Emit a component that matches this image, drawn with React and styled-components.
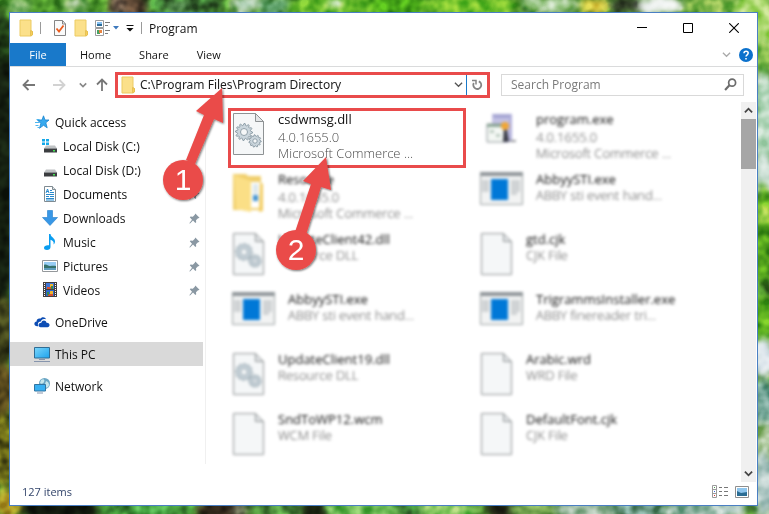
import React, { useState } from "react";
import styled, { createGlobalStyle } from "styled-components";

const GlobalStyle = createGlobalStyle`
  * {
    box-sizing: border-box;
  }

  body {
    margin: 0;
    background: #2c4a1c;
    font-family: "Open Sans", "Noto Sans", sans-serif;
    font-size: 12px;
    color: #111;
  }

  button,
  input {
    font: inherit;
    color: inherit;
    border: none;
    background: none;
    margin: 0;
    padding: 0;
    outline: none;
  }

  svg {
    display: block;
    flex: none;
  }
`;

const Desktop = styled.div`
  position: relative;
  display: flex;
  min-height: 100vh;
  padding: 12px 11px 8px 9px;
`;

const Wallpaper = styled.svg`
  position: absolute;
  inset: 0;
  width: 100%;
  height: 100%;
`;

const Grain = styled.rect`
  mix-blend-mode: overlay;
`;

const Window = styled.main`
  position: relative;
  flex: 1;
  min-width: 0;
  display: flex;
  flex-direction: column;
  background: #fff;
  border: 1px solid #4a7fc4;
`;

const TitleBar = styled.header`
  display: flex;
  align-items: center;
  height: 30px;
  padding-left: 9px;
`;

const QuickButton = styled.button`
  display: flex;
  align-items: center;
  justify-content: center;
  width: ${({ $width = 14 }) => $width}px;
  height: 22px;
`;

const Separator = styled.span`
  width: 1px;
  height: 12px;
  margin: 0 ${({ $gap }) => $gap}px 0 7px;
  background: #9a9a9a;
`;

const QuickTools = styled.div`
  display: flex;
  align-items: center;
  gap: 7px;
`;

const Title = styled.h1`
  flex: 1;
  margin: 0;
  font-size: 12px;
  font-weight: 400;
`;

const WindowButton = styled.button`
  display: flex;
  align-items: center;
  justify-content: center;
  width: 46px;
  height: 30px;
`;

const Ribbon = styled.nav`
  display: flex;
  align-items: center;
  height: 24px;
  border-bottom: 1px solid #dadbdc;
`;

const Tab = styled.button`
  height: 23px;
  padding: 0 14px;
  font-size: 11px;
  ${({ $primary }) =>
    $primary &&
    `
      width: 56px;
      background: #1979ca;
      color: #fff;
    `}
`;

const Spacer = styled.div`
  flex: 1;
`;

const RibbonButton = styled.button`
  padding: 4px;
`;

const NavBar = styled.div`
  display: flex;
  align-items: center;
  height: 35px;
  padding: 0 13px 0 8px;
`;

const NavButtons = styled.div`
  display: flex;
  align-items: center;
  width: 97px;
`;

const NavButton = styled.button`
  display: flex;
  justify-content: center;
  width: ${({ $width }) => $width}px;
`;

const AddressBar = styled.div`
  flex: 1;
  min-width: 0;
  display: flex;
  align-items: center;
  height: 26px;
  padding-left: 3px;
  border: 3px solid #e94b4b;
`;

const AddressInput = styled.input`
  flex: 1;
  min-width: 0;
  margin-left: 5px;
  color: #1c1c1c;
  font-family: "Noto Sans", "Open Sans", sans-serif;
`;

const AddressButton = styled.button`
  display: flex;
  align-items: center;
  justify-content: center;
  width: ${({ $refresh }) => ($refresh ? "21px" : "16px")};
  height: 20px;
  border-left: ${({ $refresh }) => ($refresh ? "1px solid #1979ca" : "none")};
`;

const SearchBox = styled.form`
  display: flex;
  align-items: center;
  width: 243px;
  height: 22px;
  margin-left: 11px;
  padding: 0 6px 0 9px;
  border: 1px solid #d9d9d9;
`;

const SearchInput = styled.input`
  flex: 1;
  min-width: 0;

  &::placeholder {
    color: #7a7a7a;
    opacity: 1;
  }
`;

const Content = styled.div`
  flex: 1;
  display: flex;
  min-height: 0;
`;

const Sidebar = styled.aside`
  flex: none;
  width: 196px;
  margin-bottom: 18px;
  padding: 8px 2px 0 0;
  border-right: 1px solid #f0f0f0;
`;

const NavGroup = styled.ul`
  margin: 0 0 8px;
  padding: 0;
  list-style: none;
`;

const NavLink = styled.a`
  display: flex;
  align-items: center;
  gap: 5px;
  height: 24px;
  padding: 0 3px 0 ${({ $nested }) => ($nested ? "32px" : "24px")};
  background: ${({ $active }) => ($active ? "#d9d9d9" : "transparent")};
  color: #111;
  text-decoration: none;
`;

const NavLabel = styled.span`
  flex: 1;
`;

const FileGrid = styled.ul`
  flex: 1;
  display: grid;
  grid-template-columns: repeat(auto-fill, 238px);
  grid-auto-rows: 60px;
  align-content: start;
  column-gap: 10px;
  margin: 0;
  padding: 6px 0 10px 22px;
  list-style: none;
`;

const FileTile = styled.li`
  padding: 0 1px;
  border: 3px solid ${({ $marked }) => ($marked ? "#e94b4b" : "transparent")};
`;

const FileBody = styled.div`
  display: flex;
  gap: 13px;
  filter: ${({ $blurred }) => ($blurred ? "blur(1.4px)" : "none")};

  svg {
    margin-top: 1px;
  }
`;

const FileText = styled.div`
  font-size: 13px;
  line-height: 16px;
  white-space: nowrap;
`;

const FileName = styled.div`
  color: #111;
`;

const FileMeta = styled.div`
  margin-top: ${({ $version }) => ($version ? "2px" : "0")};
  color: #4c4c4c;
  font-weight: 300;
`;

const Scrollbar = styled.div`
  display: flex;
  flex-direction: column;
  width: 15px;
  margin-right: 1px;
  background: #f0f0f0;
`;

const ScrollButton = styled.button`
  display: flex;
  align-items: center;
  justify-content: center;
  height: 17px;
`;

const ScrollTrack = styled.div`
  flex: 1;
`;

const ScrollThumb = styled.div`
  height: 50px;
  background: #a6a6a6;
`;

const StatusBar = styled.footer`
  display: flex;
  align-items: center;
  gap: 7px;
  height: 23px;
  padding: 0 8px 4px 12px;
  color: #33456b;
  font-size: 11px;
`;

const Callouts = styled.svg`
  position: absolute;
  left: 0;
  top: 0;
  pointer-events: none;
`;

const FolderIcon = () => (
  <svg width="14" height="18" viewBox="0 0 14 18">
    <path d="M1 1h11v10.500l1.500 1V16l-1.500 1H1z" fill="#fbe08a" stroke="#eccb62" />
    <path d="M11.500 11.500v5h1l1-1v-3z" fill="#f6cf5a" stroke="#dfb748" strokeWidth=".7" />
  </svg>
);

const PropertiesIcon = () => (
  <svg width="14" height="18" viewBox="0 0 14 18" fill="none">
    <path d="M1.500 1.500h8L12.500 5v11.500h-11z" fill="#fafafa" stroke="#858585" />
    <path d="M9.500 1.500V5h3" stroke="#858585" />
    <path d="M3.500 9.500l2.500 3 4.500-6" stroke="#ea5b1c" strokeWidth="1.800" />
  </svg>
);

const ViewIcon = () => (
  <svg width="24" height="16" viewBox="0 0 24 16">
    <path d="M.500.500h8v7h-8zM.500 8.500h8v7h-8z" fill="#fff" stroke="#9b9b9b" />
    <path d="M2 2h5v2H2z" fill="#86c1f3" />
    <path d="M2 4h5v2H2z" fill="#2e6d98" />
    <path d="M2 10h3v4H2z" fill="#44a262" />
    <path d="M4 10h3v3H4z" fill="#e98541" />
    <path d="M10 2.500h5M10 5.500h3M10 10.500h5M10 13.500h3" stroke="#7c7c7c" />
    <path d="M18 6h6l-3 3.500z" fill="#3e79bd" />
  </svg>
);

const MoreIcon = () => (
  <svg width="8" height="8" viewBox="0 0 8 8">
    <path d="M.500 1h7v1h-7zM.500 4h7L4 7.500z" fill="#111" />
  </svg>
);

const Chevron = ({ size = 9, color = "#777", width = 1.4, up }) => (
  <svg width={size} height={size} viewBox="0 0 10 10" fill="none">
    <path
      d={up ? "M1 7l4-4 4 4" : "M1 3l4 4 4-4"}
      stroke={color}
      strokeWidth={width}
    />
  </svg>
);

const ArrowIcon = ({ color, rotate = 0 }) => (
  <svg width="14" height="14" viewBox="0 0 14 14" fill="none">
    <path
      d="M13 7H2M6.500 2L1.500 7l5 5"
      stroke={color}
      strokeWidth="1.800"
      transform={`rotate(${rotate} 7 7)`}
    />
  </svg>
);

const MinimizeIcon = () => (
  <svg width="10" height="10" viewBox="0 0 10 10">
    <path d="M0 4h10v1H0z" fill="#000" />
  </svg>
);

const MaximizeIcon = () => (
  <svg width="10" height="10" viewBox="0 0 10 10">
    <path d="M.500.500h9v9h-9z" fill="none" stroke="#000" />
  </svg>
);

const CloseIcon = () => (
  <svg width="10" height="10" viewBox="0 0 10 10">
    <path d="M.200.200l9.600 9.600M9.800.200L.200 9.800" stroke="#000" strokeWidth="1.100" />
  </svg>
);

const HelpIcon = () => (
  <svg width="14" height="14" viewBox="0 0 14 14">
    <circle cx="7" cy="7" r="7" fill="#0b71cc" />
    <path
      d="M5 5.200c0-2.600 4.200-2.500 4.200-.1C9.200 6.800 7 6.800 7 8.600M7 10v1.500"
      fill="none"
      stroke="#fff"
      strokeWidth="1.500"
    />
  </svg>
);

const RefreshIcon = () => (
  <svg width="12" height="12" viewBox="0 0 12 12" fill="none" stroke="#858585">
    <path d="M7.800 2.300a4 4 0 1 1-5 1.700" strokeWidth="1.800" />
    <path d="M1 1.500h4v4" strokeWidth="1.500" />
  </svg>
);

const SearchIcon = () => (
  <svg width="13" height="13" viewBox="0 0 12 12" fill="none" stroke="#6c6c6c">
    <circle cx="7.500" cy="4.300" r="3.200" strokeWidth="1.600" />
    <path d="M5 6.800L1 11" strokeWidth="2" />
  </svg>
);

const StarIcon = () => (
  <svg width="16" height="14" viewBox="0 0 16 14">
    <path
      d="M9.500.800L11 5h4l-3.200 2.800 1.400 5L9.500 10.300l-4 3 1.300-4.800L3.500 5H8z"
      fill="#37a9ee"
      stroke="#1884cf"
      strokeWidth=".8"
    />
    <path d="M2.500 4.500h3M1 7.500h4M1.500 10.500h3M3.500 12.500h2" stroke="#4db5ef" />
  </svg>
);

const DiskIcon = ({ system }) => (
  <svg width="16" height="16" viewBox="0 0 16 16">
    {system && (
      <path d="M0 1h3v2.500H0zM4 1h3v2.500H4zM0 4.500h3V7H0zM4 4.500h3V7H4z" fill="#15a8e8" />
    )}
    <path d="M4 7.500h9l2 3H2z" fill="#bfc2c4" />
    <path d="M2 10h13v4.500H2z" fill="#3b3d40" />
    <path d="M2 10h13v1H2z" fill="#8a8d90" />
    <path d="M11 12h2v1.500h-2z" fill="#43e251" />
  </svg>
);

const DocumentsIcon = () => (
  <svg width="16" height="16" viewBox="0 0 16 16">
    <path d="M2.500.500h8l3 3v12h-11z" fill="#fff" stroke="#7f8b92" />
    <path d="M10.500.500v3h3" fill="#dde3e6" stroke="#7f8b92" />
    <path d="M4 7l1.500-4L7 7M4.500 5.500h2M8 4.500h2M8 6.500h4M4 8.500h8M4 10.500h3M8 10.500h4M4 12.500h8M4 14h8" stroke="#2889cc" fill="none" />
  </svg>
);

const DownloadsIcon = () => (
  <svg width="16" height="16" viewBox="0 0 16 16">
    <path d="M5.500.500h5v7h5L8 15.500.500 7.500h5z" fill="#3897e6" stroke="#227dcb" strokeWidth=".6" />
  </svg>
);

const MusicIcon = () => (
  <svg width="16" height="16" viewBox="0 0 16 16">
    <path
      d="M7 0h1.500c.3 3.500 5 4 4.500 8-.2 1.200-.7 2-1.500 2.600.8-2.600-.6-4.200-3-4.800V13c0 2-1.500 3-3.500 3S2 15 2 13.700c0-1.700 2.500-3 5-2.400z"
      fill="#0a9df0"
    />
  </svg>
);

const PicturesIcon = () => (
  <svg width="16" height="12" viewBox="0 0 16 12">
    <path d="M.500.500h15v11H.500z" fill="#fff" stroke="#94989b" />
    <path d="M2 2h12v8H2z" fill="#98cdf4" />
    <path d="M2 5c2-1.500 4 1 6 1s4-.5 6 0v2H2z" fill="#36726c" />
    <path d="M2 8h12v2H2z" fill="#5f9dbd" />
  </svg>
);

const VideosIcon = () => (
  <svg width="16" height="16" viewBox="0 0 16 16">
    <path d="M1 0h14v15H1z" fill="#45403f" />
    <path d="M4 1h8v6H4z" fill="#3f76d8" />
    <path d="M4 8h8v6H4z" fill="#2f69cf" />
    <path d="M2.500 1v13M13.500 1v13" stroke="#fff" strokeDasharray="1 1" />
    <path d="M5 5h5v2H5zM6 12h5v2H6z" fill="#d9502e" />
    <path d="M8 2h3v3H8zM8 9h3v3H8z" fill="#efb52f" />
    <path d="M9 4h2v3H9zM5 10h2v3H5z" fill="#3a8a4c" />
  </svg>
);

const OneDriveIcon = () => (
  <svg width="16" height="12" viewBox="0 0 17 12">
    <path
      d="M3.500 10.500C-.5 10.500-.500 5.800 2.800 5.500 2.500 3 5 1.500 6.800 2.500 8 .3 12 .2 12.800 3.200c-3-1-5 .2-5.500 2.300C4.500 5.500 3.500 8 4.500 10.500z"
      fill="#0d4db4"
    />
    <path
      d="M7 11.500c-3 0-3-4.500.800-4.700C8.300 3.500 12.700 3.400 13.300 6.700c4-.3 4.200 4.800 1 4.800z"
      fill="#0d4db4"
    />
  </svg>
);

const MonitorIcon = () => (
  <svg width="16" height="16" viewBox="0 0 16 16">
    <defs>
      <linearGradient id="screen" x1="0" y1="0" x2="1" y2="1">
        <stop offset="0" stopColor="#7bd6fb" />
        <stop offset="1" stopColor="#1ca2ed" />
      </linearGradient>
    </defs>
    <path d="M.500 1.500h15v10.500H.500z" fill="url(#screen)" stroke="#2f6c94" />
    <path d="M5 13.500h6M0 15.500h16" stroke="#8795ad" />
  </svg>
);

const NetworkIcon = () => (
  <svg width="16" height="16" viewBox="0 0 16 16">
    <circle cx="10.500" cy="5.500" r="5.500" fill="#6aa6c4" />
    <path d="M7 2c3-2 4 0 3 2S7 6 6 5zM12 3c3 1 4 4 2 6s-3-1-3-3z" fill="#c6e6ec" />
    <path d="M.500 6.500h11v6.500H.500z" fill="#38b0f2" stroke="#3274a1" />
    <path d="M3 15h6" stroke="#8795ad" />
  </svg>
);

const PinIcon = () => (
  <svg width="11" height="11" viewBox="0 0 11 11">
    <path
      d="M6.300.500l4.200 4.200-1 .5-.5 0-2 2 .2 2-.8.800L4 7.500 1 10.500l-.7-.3L3 6.700.800 4.300l.8-.7 2.200.2 2-2z"
      fill="#8a98a3"
    />
  </svg>
);

// closed outline of a cog wheel around (cx, cy)
const gearPath = (cx, cy, radius, teeth) => {
  const points = [];
  for (let i = 0; i < teeth * 4; i++) {
    const r = i % 4 < 2 ? radius : radius * 0.78;
    const a = (i / (teeth * 4)) * Math.PI * 2;
    points.push(`${(cx + r * Math.cos(a)).toFixed(2)} ${(cy + r * Math.sin(a)).toFixed(2)}`);
  }
  return `M${points.join("L")}Z`;
};

const PageIcon = ({ gears }) => (
  <svg width="33" height="44" viewBox="0 0 33 44">
    <path d="M1.500 1.500h22l8 8v33h-30z" fill="#f5f7f8" stroke="#8e9294" />
    <path d="M23.500 1.500v8h8z" fill="#e3e6e8" stroke="#8e9294" />
    {gears && (
      <g fill="#cbd6dd" stroke="#8899a3" strokeWidth=".9">
        <path d={gearPath(12, 20, 8.5, 12)} />
        <circle cx="12" cy="20" r="3.500" fill="#f5f7f8" />
        <path d={gearPath(23, 29, 6.2, 11)} />
        <circle cx="23" cy="29" r="2.200" fill="#f5f7f8" />
      </g>
    )}
  </svg>
);

const AppIcon = () => (
  <svg width="43" height="33" viewBox="0 0 43 33">
    <path d="M.500.500h42v32H.500z" fill="#f2f3f3" stroke="#9aa0a3" />
    <path d="M0 0h43v4H0z" fill="#8f9599" />
    <path d="M2 8h7v12H2zM31 8h9v12h-3v3h-6z" fill="#d0d3d5" />
    <path d="M11 7h17v21H11z" fill="#0078d7" />
  </svg>
);

const InstallerIcon = () => (
  <svg width="43" height="40" viewBox="0 0 43 40">
    <path d="M12 2h20v26l-6 3-14-6z" fill="#c3c2e4" />
    <path d="M12 2h20l-3 4H14z" fill="#a5a5d3" />
    <path d="M29 6l3-4v26l-3 2z" fill="#b3b1dc" />
    <path d="M7 12h17v18H7z" fill="#f4f8f4" stroke="#8d9499" />
    <path d="M7 12h17v3H7z" fill="#8aa595" />
    <path d="M10 18h4v3h-4zM16 22h4v3h-4z" fill="#b9c9be" />
    <circle cx="25" cy="14" r="4" fill="#f0a637" />
    <path d="M24 18h3l2 12h-6z" fill="#3b3d48" />
    <path d="M30 28h6v2h-6z" fill="#94969c" />
  </svg>
);

const OpenFolderIcon = () => (
  <svg width="33" height="42" viewBox="0 0 33 42">
    <path d="M1 2h13l2 2h13v34H1z" fill="#f0cf6c" />
    <path d="M19 10h9v26h-9z" fill="#fff" />
    <path d="M21 23h5v6h-5z" fill="#4192cf" />
    <path d="M21 12h5v10h-5z" fill="#dce7ec" />
    <path d="M2 3l17 6v31L4 37z" fill="#fbdf86" />
    <path d="M28 10l3 2v27l-4 1z" fill="#f3cd63" />
  </svg>
);

const DetailsViewIcon = () => (
  <svg width="16" height="13" viewBox="0 0 16 13" fill="none">
    <path d="M.500.500h4v12h-4zM.500 4.500h4M.500 8.500h4" stroke="#9a9a9a" />
    <path d="M7 2.500h3M12 2.500h4M7 6.500h3M12 6.500h4M7 10.500h3M12 10.500h4" stroke="#777" />
    <path d="M2 2h1v1H2z" fill="#4a9a4a" />
    <path d="M2 6h1v1H2z" fill="#3e6fe0" />
    <path d="M2 10h1v1H2z" fill="#e02e2e" />
  </svg>
);

const ThumbnailViewIcon = () => (
  <svg width="14" height="12" viewBox="0 0 14 12">
    <path d="M.500.500h13v11H.500z" fill="#fff" stroke="#8f8f8f" />
    <path d="M2 2h10v8H2z" fill="#8fc6ee" />
    <path d="M2 5l4 2 6-1v4H2z" fill="#2b6d94" />
  </svg>
);

const quickAccess = [
  { label: "Local Disk (C:)", icon: <DiskIcon system /> },
  { label: "Local Disk (D:)", icon: <DiskIcon /> },
  { label: "Documents", icon: <DocumentsIcon />, pinned: true },
  { label: "Downloads", icon: <DownloadsIcon />, pinned: true },
  { label: "Music", icon: <MusicIcon />, pinned: true },
  { label: "Pictures", icon: <PicturesIcon />, pinned: true },
  { label: "Videos", icon: <VideosIcon />, pinned: true },
];

const places = [
  { label: "OneDrive", icon: <OneDriveIcon /> },
  { label: "This PC", icon: <MonitorIcon />, active: true },
  { label: "Network", icon: <NetworkIcon /> },
];

const files = [
  { name: "csdwmsg.dll", version: "4.0.1655.0", info: "Microsoft Commerce ...", icon: <PageIcon gears />, marked: true },
  { name: "program.exe", version: "4.0.1655.0", info: "Microsoft Commerce ...", icon: <InstallerIcon /> },
  { name: "Resource", version: "4.0.1655.0", info: "Microsoft Commerce ...", icon: <OpenFolderIcon /> },
  { name: "AbbyySTI.exe", info: "ABBY sti event hand...", icon: <AppIcon /> },
  { name: "UpdateClient42.dll", info: "Resource DLL", icon: <PageIcon gears /> },
  { name: "gtd.cjk", info: "CJK File", icon: <PageIcon /> },
  { name: "AbbyySTI.exe", info: "ABBY sti event hand...", icon: <AppIcon /> },
  { name: "TrigrammsInstaller.exe", info: "ABBY finereader tri...", icon: <AppIcon /> },
  { name: "UpdateClient19.dll", info: "Resource DLL", icon: <PageIcon gears /> },
  { name: "Arabic.wrd", info: "WRD File", icon: <PageIcon /> },
  { name: "SndToWP12.wcm", info: "WCM File", icon: <PageIcon /> },
  { name: "DefaultFont.cjk", info: "CJK File", icon: <PageIcon /> },
];

// cx, cy, rx, ry, colour
const foliage = [
  [40, 4, 70, 16, "#4f9a2c"],
  [20, 6, 12, 8, "#7fb56a"],
  [75, 4, 12, 7, "#97bd84"],
  [127, 5, 22, 14, "#54402f"],
  [118, 4, 6, 14, "#8a735f"],
  [185, 4, 38, 12, "#3f7a35"],
  [180, 6, 12, 4, "#7fae7b"],
  [245, 4, 14, 9, "#cfe3d3"],
  [275, 6, 16, 8, "#68a975"],
  [345, 6, 60, 12, "#63b728"],
  [335, 4, 8, 5, "#bfe0ae"],
  [400, 4, 30, 12, "#43a116"],
  [470, 6, 50, 12, "#6fc02a"],
  [550, 4, 28, 8, "#b9d8ab"],
  [595, 6, 14, 8, "#d7c13a"],
  [625, 5, 18, 8, "#34412a"],
  [660, 5, 24, 9, "#f0f3f2"],
  [712, 6, 28, 10, "#7fb649"],
  [755, 30, 26, 40, "#a8d76a"],
  [764, 60, 8, 18, "#74b343"],
  [764, 120, 12, 50, "#b5d8bd"],
  [764, 175, 12, 24, "#cfe2d8"],
  [764, 235, 12, 50, "#55a51c"],
  [764, 215, 8, 8, "#a1d44c"],
  [764, 320, 12, 26, "#5aae1e"],
  [764, 358, 12, 20, "#e0e8ee"],
  [764, 405, 12, 26, "#78a99b"],
  [764, 440, 12, 18, "#9dbe88"],
  [764, 485, 12, 34, "#b5ccc9"],
  [2, 170, 16, 160, "#141f10"],
  [4, 40, 10, 24, "#1e3a15"],
  [2, 330, 14, 34, "#3c3f19"],
  [2, 390, 14, 28, "#4e4119"],
  [2, 450, 14, 38, "#6c6b18"],
  [8, 504, 14, 14, "#b8a52a"],
  [62, 510, 42, 12, "#10160c"],
  [148, 510, 50, 12, "#3f8d36"],
  [150, 510, 20, 4, "#4fb24d"],
  [222, 510, 26, 12, "#2f2519"],
  [240, 510, 8, 4, "#9aa281"],
  [278, 510, 28, 12, "#4c8c3c"],
  [315, 510, 14, 12, "#18200f"],
  [365, 510, 42, 12, "#6ab853"],
  [412, 510, 14, 12, "#3a7a33"],
  [450, 510, 30, 12, "#80c45c"],
  [500, 510, 14, 12, "#1b1d11"],
  [532, 510, 22, 12, "#6e9f4b"],
  [585, 510, 34, 12, "#9ab99f"],
  [640, 510, 28, 12, "#6c9a85"],
  [700, 510, 38, 12, "#8cb3a0"],
  [735, 510, 14, 6, "#d1e0de"],
];

const Backdrop = () => (
  <Wallpaper viewBox="0 0 769 514" preserveAspectRatio="none" aria-hidden="true">
    <defs>
      <filter id="leaves" x="-5%" y="-5%" width="110%" height="110%" colorInterpolationFilters="sRGB">
        <feTurbulence type="fractalNoise" baseFrequency="0.1" numOctaves="2" seed="4" />
        <feDisplacementMap in="SourceGraphic" scale="12" xChannelSelector="R" yChannelSelector="G" />
        <feGaussianBlur stdDeviation="3" />
      </filter>
      <filter id="grain" x="0" y="0" width="100%" height="100%" colorInterpolationFilters="sRGB">
        <feTurbulence type="fractalNoise" baseFrequency="0.08" numOctaves="2" seed="9" />
        <feColorMatrix values="2 0 0 0 -.5 2 0 0 0 -.5 2 0 0 0 -.5 0 0 0 0 1" />
      </filter>
    </defs>
    <rect width="769" height="514" fill="#4b8a2c" />
    <g filter="url(#leaves)">
      {foliage.map(([cx, cy, rx, ry, fill], i) => (
        <ellipse key={i} cx={cx} cy={cy} rx={rx} ry={ry} fill={fill} />
      ))}
    </g>
    <Grain width="769" height="514" filter="url(#grain)" opacity=".5" />
  </Wallpaper>
);

const Steps = () => (
  <Callouts width="360" height="280" viewBox="10 13 360 280" aria-label="Steps 1 and 2">
    <defs>
      <filter id="drop" x="-20%" y="-20%" width="150%" height="150%">
        <feDropShadow dx="1" dy="1" stdDeviation="1.200" floodColor="#000" floodOpacity=".55" />
      </filter>
    </defs>
    <g fill="#ea4b49" filter="url(#drop)">
      <path d="M222 88l-26 23 8 4-18 45 9 4 19-45 9 4z" />
      <circle cx="183" cy="180" r="20" />
      <path d="M326 157l-23 24 8 3-16 48 11 3 15-48 10 3z" />
      <circle cx="296" cy="250" r="20" />
    </g>
    <g
      fill="#fff"
      fontFamily="Liberation Sans, Arial, sans-serif"
      fontSize="30"
      textAnchor="middle"
    >
      <text x="183" y="190">1</text>
      <text x="296" y="260">2</text>
    </g>
  </Callouts>
);

const NavItem = ({ label, icon, pinned, nested, active }) => (
  <li>
    <NavLink href="#" $nested={nested} $active={active}>
      {icon}
      <NavLabel>{label}</NavLabel>
      {pinned && <PinIcon />}
    </NavLink>
  </li>
);

const FileItem = ({ file }) => (
  <FileTile $marked={file.marked}>
    <FileBody $blurred={!file.marked}>
      {file.icon}
      <FileText>
        <FileName>{file.name}</FileName>
        {file.version && <FileMeta $version>{file.version}</FileMeta>}
        <FileMeta>{file.info}</FileMeta>
      </FileText>
    </FileBody>
  </FileTile>
);

const App = () => {
  const [path, setPath] = useState("C:\\Program Files\\Program Directory");
  const [query, setQuery] = useState("");

  return (
    <>
      <GlobalStyle />
      <Desktop>
        <Backdrop />
        <Window>
          <TitleBar>
            <FolderIcon />
            <Separator $gap={12} />
            <QuickTools>
              <QuickButton aria-label="Properties"><PropertiesIcon /></QuickButton>
              <QuickButton aria-label="New folder"><FolderIcon /></QuickButton>
              <QuickButton $width={24} aria-label="Change view"><ViewIcon /></QuickButton>
              <QuickButton $width={8} aria-label="Customize toolbar"><MoreIcon /></QuickButton>
            </QuickTools>
            <Separator $gap={7} />
            <Title>Program</Title>
            <WindowButton aria-label="Minimize"><MinimizeIcon /></WindowButton>
            <WindowButton aria-label="Maximize"><MaximizeIcon /></WindowButton>
            <WindowButton aria-label="Close"><CloseIcon /></WindowButton>
          </TitleBar>

          <Ribbon>
            <Tab $primary>File</Tab>
            <Tab>Home</Tab>
            <Tab>Share</Tab>
            <Tab>View</Tab>
            <Spacer />
            <RibbonButton aria-label="Expand ribbon"><Chevron color="#aaa" /></RibbonButton>
            <RibbonButton aria-label="Help"><HelpIcon /></RibbonButton>
          </Ribbon>

          <NavBar>
            <NavButtons>
              <NavButton $width={22} aria-label="Back"><ArrowIcon color="#777" /></NavButton>
              <NavButton $width={38} aria-label="Forward"><ArrowIcon color="#d2d2d2" rotate={180} /></NavButton>
              <NavButton $width={10} aria-label="Recent"><Chevron size={8} color="#888" width={2} /></NavButton>
              <NavButton $width={27} aria-label="Up"><ArrowIcon color="#777" rotate={90} /></NavButton>
            </NavButtons>
            <AddressBar>
              <FolderIcon />
              <AddressInput
                aria-label="Address"
                value={path}
                onChange={(e) => setPath(e.target.value)}
              />
              <AddressButton aria-label="Previous locations"><Chevron color="#555" /></AddressButton>
              <AddressButton $refresh aria-label="Refresh"><RefreshIcon /></AddressButton>
            </AddressBar>
            <SearchBox onSubmit={(e) => e.preventDefault()}>
              <SearchInput
                aria-label="Search Program"
                placeholder="Search Program"
                value={query}
                onChange={(e) => setQuery(e.target.value)}
              />
              <SearchIcon />
            </SearchBox>
          </NavBar>

          <Content>
            <Sidebar>
              <NavGroup>
                <NavItem label="Quick access" icon={<StarIcon />} />
                {quickAccess.map((item) => (
                  <NavItem key={item.label} nested {...item} />
                ))}
              </NavGroup>
              {places.map((item) => (
                <NavGroup key={item.label}>
                  <NavItem {...item} />
                </NavGroup>
              ))}
            </Sidebar>
            <FileGrid>
              {files.map((file, i) => (
                <FileItem key={i} file={file} />
              ))}
            </FileGrid>
            <Scrollbar>
              <ScrollButton aria-label="Scroll up"><Chevron up color="#444" width={2} /></ScrollButton>
              <ScrollTrack>
                <ScrollThumb />
              </ScrollTrack>
              <ScrollButton aria-label="Scroll down"><Chevron color="#444" width={2} /></ScrollButton>
            </Scrollbar>
          </Content>

          <StatusBar>
            <span>127 items</span>
            <Spacer />
            <DetailsViewIcon />
            <ThumbnailViewIcon />
          </StatusBar>
          <Steps />
        </Window>
      </Desktop>
    </>
  );
};

export default App;
